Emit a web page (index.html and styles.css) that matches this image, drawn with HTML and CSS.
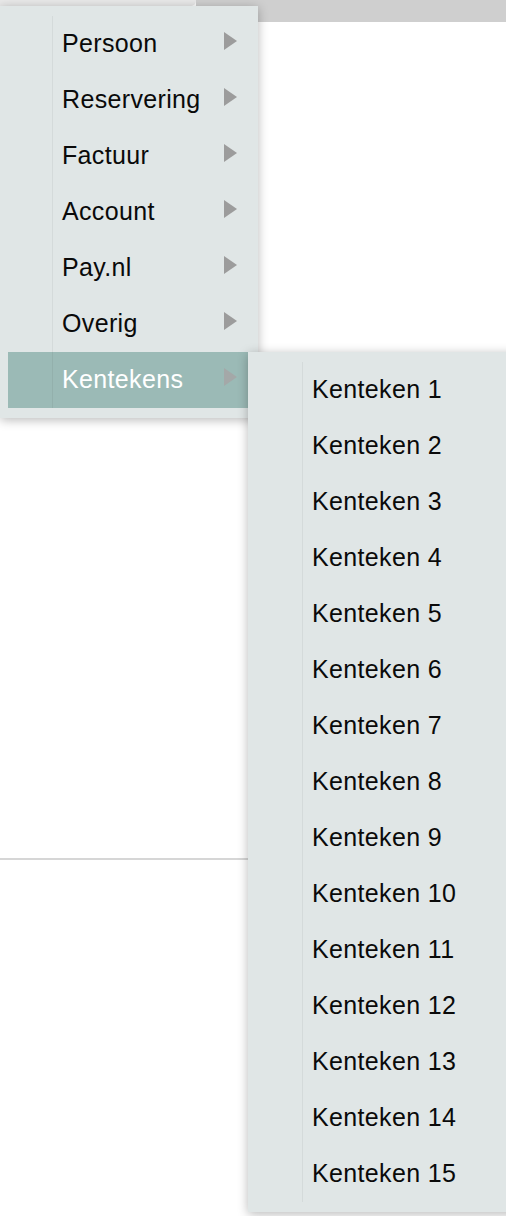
FILE: index.html
```html
<!DOCTYPE html>
<html lang="nl">
<head>
<meta charset="utf-8">
<title>Menu</title>
<link rel="stylesheet" href="styles.css">
</head>
<body>
<div class="topbar"><div class="tab"></div><div class="bar"></div></div>
<div class="page"><div class="rule"></div></div>

<ul class="menu main">
  <li class="item has-sub">Persoon</li>
  <li class="item has-sub">Reservering</li>
  <li class="item has-sub">Factuur</li>
  <li class="item has-sub">Account</li>
  <li class="item has-sub">Pay.nl</li>
  <li class="item has-sub">Overig</li>
  <li class="item has-sub active">Kentekens</li>
</ul>

<ul class="menu sub">
  <li class="item">Kenteken 1</li>
  <li class="item">Kenteken 2</li>
  <li class="item">Kenteken 3</li>
  <li class="item">Kenteken 4</li>
  <li class="item">Kenteken 5</li>
  <li class="item">Kenteken 6</li>
  <li class="item">Kenteken 7</li>
  <li class="item">Kenteken 8</li>
  <li class="item">Kenteken 9</li>
  <li class="item">Kenteken 10</li>
  <li class="item">Kenteken 11</li>
  <li class="item">Kenteken 12</li>
  <li class="item">Kenteken 13</li>
  <li class="item">Kenteken 14</li>
  <li class="item">Kenteken 15</li>
</ul>
</body>
</html>
```

FILE: styles.css
```css
html, body {
  margin: 0;
  padding: 0;
  background: #ffffff;
  font-family: "Liberation Sans", Arial, Helvetica, sans-serif;
}

.topbar {
  display: flex;
  height: 22px;
}
.tab {
  width: 196px;
  height: 6px;
  background: #e9e9e9;
  border-bottom-right-radius: 5px;
}
.bar {
  flex: 1;
  background: #cfcfcf;
}

.page {
  padding-top: 836px;
}
.rule {
  height: 2px;
  background: #d6d6d6;
}

.menu {
  position: absolute;
  margin: 0;
  list-style: none;
  background: #e0e6e6;
  box-shadow: 0 2px 10px rgba(0, 0, 0, 0.28);
  box-sizing: border-box;
}
.menu::after {
  content: "";
  position: absolute;
  top: 10px;
  bottom: 10px;
  width: 1px;
  background: rgba(0, 0, 0, 0.05);
  z-index: 1;
}

.main {
  left: 0;
  top: 6px;
  width: 258px;
  padding: 10px 10px 10px 8px;
}
.main::after {
  left: 52px;
}
.main .item {
  padding-left: 54px;
}

.sub {
  left: 248px;
  top: 352px;
  width: 280px;
  padding: 10px 0;
  z-index: 2;
}
.sub::after {
  left: 54px;
}
.sub .item {
  padding-left: 64px;
}

.item {
  position: relative;
  height: 56px;
  box-sizing: border-box;
  padding-bottom: 2px;
  line-height: 54px;
  font-size: 25px;
  letter-spacing: 0.35px;
  color: #0a0a0a;
  white-space: nowrap;
}
.has-sub::after {
  content: "";
  position: absolute;
  right: 11px;
  top: 16px;
  width: 0;
  height: 0;
  border-left: 13px solid #9c9c9c;
  border-top: 9px solid transparent;
  border-bottom: 9px solid transparent;
}
.active {
  background: #9bbab6;
  color: #ffffff;
}
.active::after {
  border-left-color: #a4a8a8;
}
```
